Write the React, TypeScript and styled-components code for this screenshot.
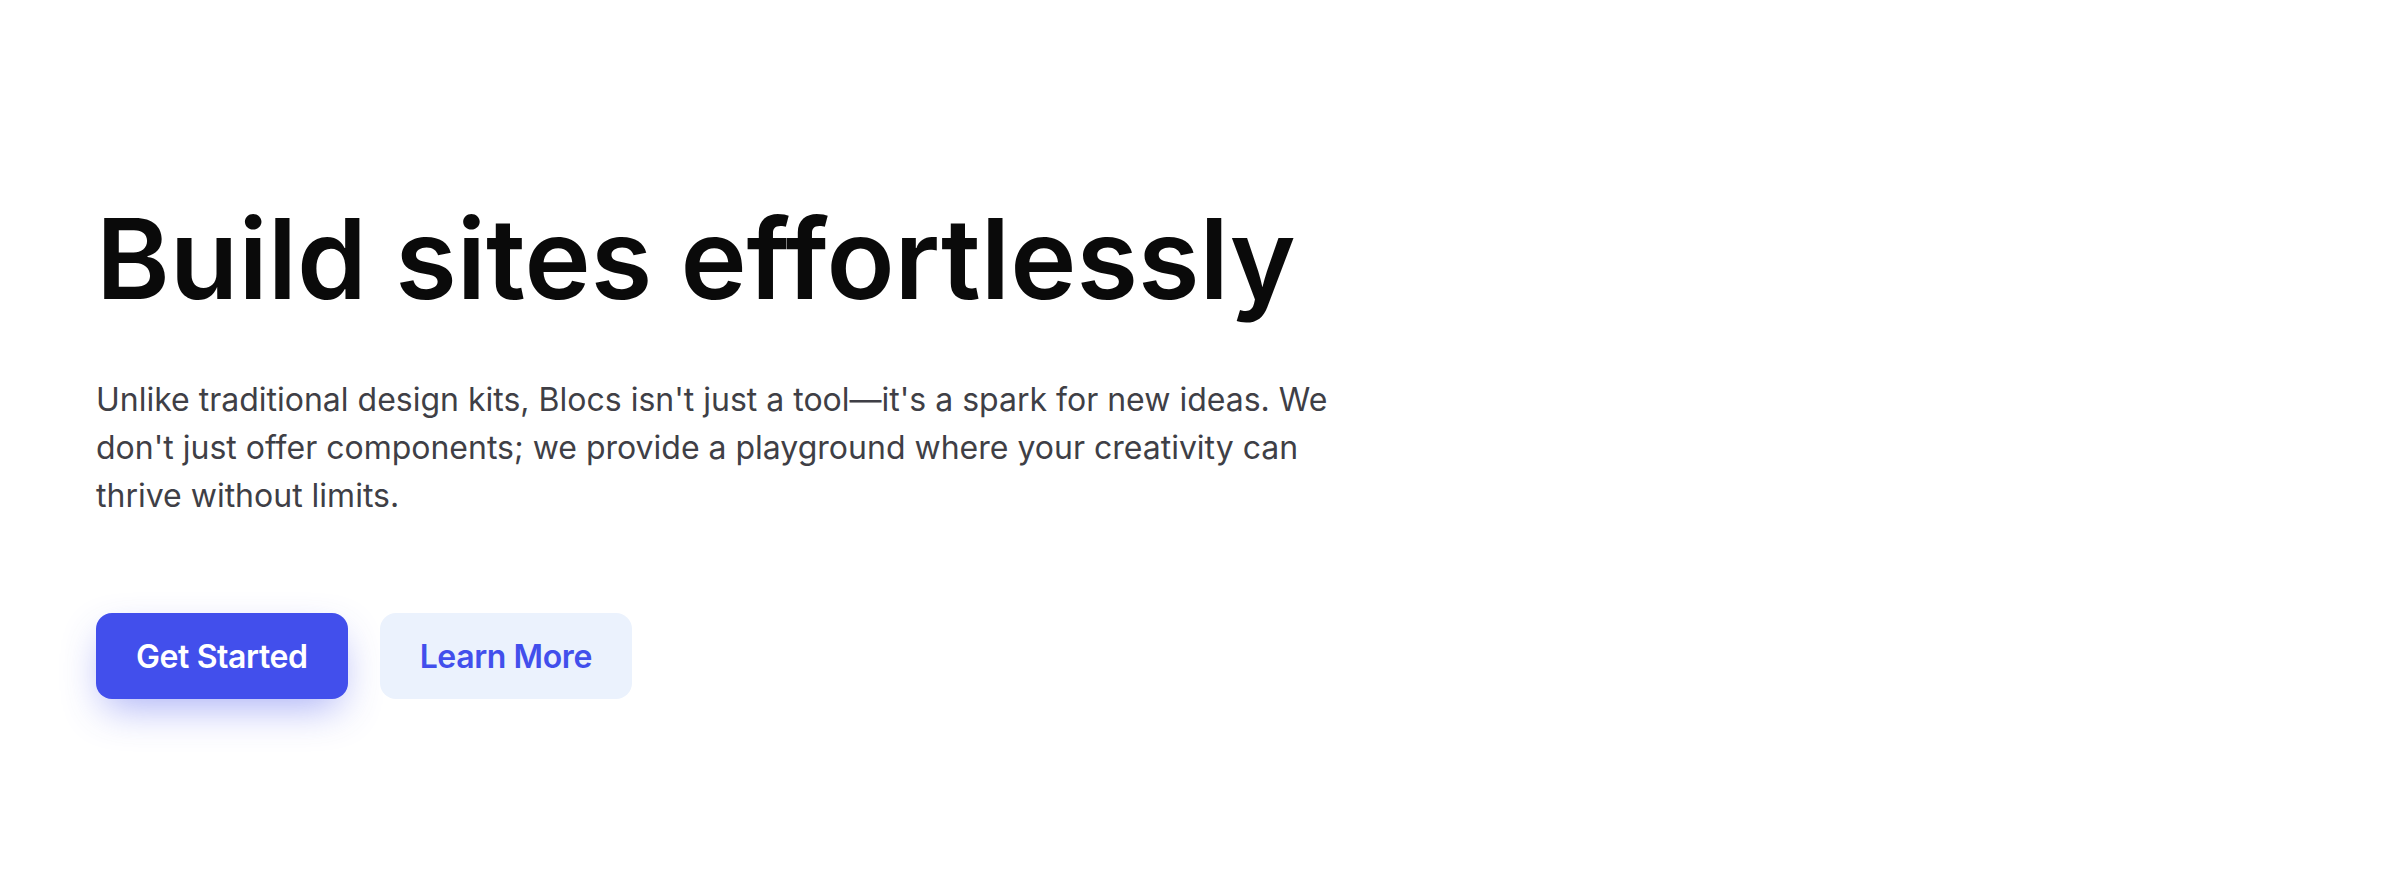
import React from "react";
import styled, { createGlobalStyle } from "styled-components";

const Global = createGlobalStyle`
  html, body { margin: 0; padding: 0; background: #ffffff; }
  body { font-family: Inter, "Noto Sans", sans-serif; -webkit-font-smoothing: antialiased; }
`;

const Hero = styled.section`
  box-sizing: border-box;
  min-height: 892px;
  padding: 197px 96px 0;
  display: flex;
  flex-direction: column;
`;

const Content = styled.div`
  max-width: 1260px;
  display: flex;
  flex-direction: column;
`;

const Title = styled.h1`
  margin: 0;
  font-family: Inter, sans-serif;
  font-weight: 600;
  font-size: 112px;
  line-height: 1.1;
  letter-spacing: 0;
  color: #0a0a0a;
`;

const Lead = styled.p`
  margin: 56px 0 0;
  max-width: 1240px;
  font-family: Inter, sans-serif;
  font-size: 32px;
  line-height: 1.5;
  color: #3f3f46;
`;

const Actions = styled.div`
  margin-top: 93px;
  display: flex;
  gap: 32px;
`;

const Button = styled.button<{ $primary?: boolean }>`
  height: 86px;
  padding: 0 40px;
  border: none;
  border-radius: 16px;
  font-family: Inter, sans-serif;
  font-weight: 600;
  font-size: 32px;
  letter-spacing: -0.4px;
  cursor: pointer;
  background: ${(p) => (p.$primary ? "#424fec" : "#ebf2fd")};
  color: ${(p) => (p.$primary ? "#ffffff" : "#424fec")};
  box-shadow: ${(p) => (p.$primary ? "0 16px 40px -8px rgba(66, 79, 236, 0.45)" : "none")};
`;

export default function App() {
  return (
    <>
      <Global />
      <Hero>
        <Content>
          <Title>Build sites effortlessly</Title>
          <Lead>
            Unlike traditional design kits, Blocs isn't just a tool—it's a spark for new ideas. We
            don't just offer components; we provide a playground where your creativity can thrive
            without limits.
          </Lead>
          <Actions>
            <Button $primary>Get Started</Button>
            <Button>Learn More</Button>
          </Actions>
        </Content>
      </Hero>
    </>
  );
}
